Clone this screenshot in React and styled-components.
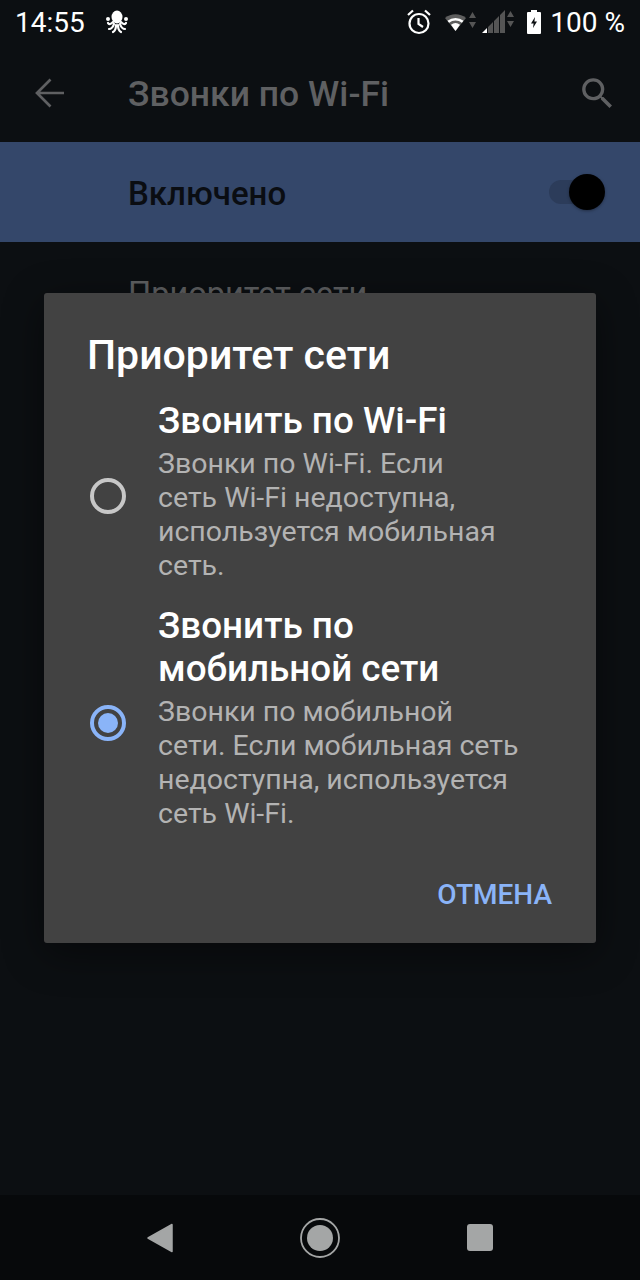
import React from "react";
import styled, { createGlobalStyle } from "styled-components";

const Global = createGlobalStyle`
  html, body { margin: 0; padding: 0; background: #0c0f12; }
  * { box-sizing: border-box; }
`;

const Screen = styled.div`
  position: relative;
  width: 640px;
  height: 1280px;
  display: flex;
  flex-direction: column;
  background: #0c0f12;
  font-family: Roboto, "Noto Sans", sans-serif;
  overflow: hidden;
`;

const StatusBar = styled.div`
  height: 44px;
  padding: 0 15px;
  display: flex;
  align-items: center;
  color: #fff;
  font-size: 28px;
  justify-content: space-between;
`;

const StatusGroup = styled.div`
  display: flex;
  align-items: center;
`;

const Clock = styled.span`
  margin-right: 21px;
`;

const StatusIcon = styled.svg`
  flex: none;
  margin-right: ${(p) => p.$gap}px;
`;

const Toolbar = styled.div`
  height: 98px;
  display: flex;
  align-items: center;
  padding: 0 22px 0 35px;
  color: #5f6062;
`;

const ToolbarTitle = styled.div`
  flex: 1;
  margin: 1px 0 0 63px;
  font-size: 35.5px;
  font-weight: 500;
  white-space: nowrap;
`;

const Banner = styled.div`
  height: 100px;
  background: #34476a;
  display: flex;
  align-items: center;
  justify-content: space-between;
  padding: 0 39px 0 128px;
  color: #0a0d12;
`;

const BannerLabel = styled.div`
  font-size: 33px;
  font-weight: 500;
  margin-top: 2px;
`;

const Track = styled.div`
  position: relative;
  width: 52px;
  height: 24px;
  border-radius: 12px;
  background: #2c3c5a;
`;

const Thumb = styled.div`
  position: absolute;
  right: -4px;
  top: -6px;
  width: 36px;
  height: 36px;
  border-radius: 50%;
  background: #000;
  box-shadow: 0 1px 3px rgba(0, 0, 0, 0.35);
`;

const Content = styled.div`
  flex: 1;
  padding: 32px 0 0 128px;
`;

const SettingLabel = styled.div`
  color: #5f6062;
  font-size: 32.5px;
  line-height: 40px;
`;

const NavBar = styled.div`
  height: 85px;
  background: #07090b;
  display: flex;
  align-items: center;
  justify-content: center;
  gap: 127px;
`;

const Dialog = styled.div`
  position: absolute;
  left: 44px;
  top: 293px;
  width: 552px;
  height: 650px;
  background: #424242;
  border-radius: 3px;
  box-shadow: 0 10px 40px rgba(0, 0, 0, 0.45);
  padding: 38px 44px 0 44px;
  display: flex;
  flex-direction: column;
`;

const DialogTitle = styled.div`
  color: #fff;
  font-size: 41px;
  font-weight: 500;
  line-height: 48px;
  margin-left: -1px;
`;

const Option = styled.div`
  display: flex;
  align-items: center;
  margin-top: ${(p) => p.$gap}px;
`;

const Radio = styled.div`
  flex: none;
  width: 36px;
  height: 36px;
  margin: 10px 32px 0 2px;
  border-radius: 50%;
  border: 4px solid ${(p) => (p.$on ? "#8ab4f8" : "#c7c7c7")};
  display: flex;
  align-items: center;
  justify-content: center;
`;

const RadioDot = styled.div`
  width: 20px;
  height: 20px;
  border-radius: 50%;
  background: #8ab4f8;
`;

const OptionText = styled.div`
  width: 365px;
`;

const OptionTitle = styled.div`
  color: #fff;
  font-size: 36.8px;
  font-weight: 500;
  line-height: 43px;
`;

const OptionDesc = styled.div`
  color: #b3b3b3;
  font-size: 28.5px;
  line-height: 34px;
  margin-top: 5px;
`;

const Actions = styled.div`
  display: flex;
  justify-content: flex-end;
  margin-top: 46px;
`;

const Cancel = styled.div`
  color: #8ab4f8;
  font-size: 28px;
  font-weight: 500;
  line-height: 36px;
`;

const OctopusIcon = () => (
  <svg width="22" height="24" viewBox="0 0 22 24" fill="#fff">
    <ellipse cx="11" cy="7" rx="5.500" ry="6.500" />
    <path d="M7 12c-2 2-4 3-5 1M15 12c2 2 4 3 5 1M8 14c-1 3-3 5-5 5M14 14c1 3 3 5 5 5M10 15c0 3-1 6-3 7M12 15c0 3 1 6 3 7" fill="none" stroke="#fff" strokeWidth="2.200" strokeLinecap="round" />
    <circle cx="2" cy="9" r="2" />
    <circle cx="20" cy="9" r="2" />
  </svg>
);

const StatusIcons = () => (
  <>
    <StatusIcon $gap={13} width="26" height="26" viewBox="0 0 26 26">
      <g fill="none" stroke="#fff" strokeWidth="2.200">
        <circle cx="13" cy="14.500" r="9.500" />
        <path d="M12.500 9v6l4.500 3" />
        <path d="M2 6l5-4.500M24 6l-5-4.500" />
      </g>
    </StatusIcon>
    <StatusIcon $gap={5} width="32" height="22" viewBox="0 0 32 22">
      <path d="M0 7a17 17 0 0 1 21 0L10.500 20z" fill="#5e5e5e" />
      <path d="M2.500 9.800a13 13 0 0 1 16 0l-1.600 1.900a10.500 10.500 0 0 0-12.800 0z" fill="#fff" />
      <path d="M6 13.800a7.500 7.500 0 0 1 9 0L10.500 20z" fill="#fff" />
      <path d="M24 7l3.500-6 3.500 6zM24 11l3.500 6 3.500-6z" fill="#555" />
    </StatusIcon>
    <StatusIcon $gap={13} width="32" height="24" viewBox="0 0 32 24">
      <path d="M0 23l5-5v5z" fill="#fff" />
      <path d="M6 23v-6l5-5v11zM12 23V11l5-5v17zM18 23V5l5-5v23z" fill="#555" />
      <path d="M25 7l3.500-6 3.500 6zM25 11l3.500 6 3.500-6z" fill="#555" />
    </StatusIcon>
    <StatusIcon $gap={9} width="14" height="24" viewBox="0 0 14 24">
      <path d="M4 0h6v2h3a1 1 0 0 1 1 1v20a1 1 0 0 1-1 1H1a1 1 0 0 1-1-1V3a1 1 0 0 1 1-1h3z" fill="#fff" />
      <path d="M8 7l-4 6.500h2.600L6 18l4-6.500H7.400z" fill="#0c0f12" />
    </StatusIcon>
  </>
);

export default function App() {
  return (
    <Screen>
      <Global />
      <StatusBar>
        <StatusGroup>
          <Clock>14:55</Clock>
          <OctopusIcon />
        </StatusGroup>
        <StatusGroup>
          <StatusIcons />
          <span>100 %</span>
        </StatusGroup>
      </StatusBar>
      <Toolbar>
        <svg width="30" height="30" viewBox="0 0 30 30" fill="none" stroke="currentColor" strokeWidth="2.700">
          <path d="M29 15H3M15.500 1.500L2 15l13.500 13.500" />
        </svg>
        <ToolbarTitle>Звонки по Wi-Fi</ToolbarTitle>
        <svg width="41" height="41" viewBox="0 0 24 24" fill="currentColor">
          <path d="M15.500 14h-.79l-.28-.27A6.471 6.471 0 0 0 16 9.500 6.500 6.500 0 1 0 9.500 16c1.610 0 3.090-.59 4.230-1.570l.27.28v.79l5 4.990L20.490 19l-4.990-5zm-6 0C7.010 14 5 11.990 5 9.500S7.010 5 9.500 5 14 7.010 14 9.500 11.990 14 9.500 14z" />
        </svg>
      </Toolbar>
      <Banner>
        <BannerLabel>Включено</BannerLabel>
        <Track>
          <Thumb />
        </Track>
      </Banner>
      <Content>
        <SettingLabel>Приоритет сети</SettingLabel>
      </Content>
      <NavBar>
        <svg width="26" height="30" viewBox="0 0 26 30">
          <path d="M25 1.500v27L1 15z" fill="#a4a6a6" stroke="#a4a6a6" strokeWidth="1.500" strokeLinejoin="round" />
        </svg>
        <svg width="40" height="40" viewBox="0 0 40 40">
          <circle cx="20" cy="20" r="19" fill="none" stroke="#a4a6a6" strokeWidth="1.800" />
          <circle cx="20" cy="20" r="13" fill="#a4a6a6" />
        </svg>
        <svg width="26" height="27" viewBox="0 0 26 27">
          <rect width="26" height="27" rx="3" fill="#a4a6a6" />
        </svg>
      </NavBar>
      <Dialog>
        <DialogTitle>Приоритет сети</DialogTitle>
        <Option $gap={20}>
          <Radio />
          <OptionText>
            <OptionTitle>Звонить по Wi-Fi</OptionTitle>
            <OptionDesc>{"Звонки по Wi-Fi. Если сеть\u00A0Wi-Fi недоступна, используется мобильная сеть."}</OptionDesc>
          </OptionText>
        </Option>
        <Option $gap={21}>
          <Radio $on>
            <RadioDot />
          </Radio>
          <OptionText>
            <OptionTitle>Звонить по мобильной сети</OptionTitle>
            <OptionDesc>Звонки по мобильной сети. Если мобильная сеть недоступна, используется сеть Wi-Fi.</OptionDesc>
          </OptionText>
        </Option>
        <Actions>
          <Cancel>ОТМЕНА</Cancel>
        </Actions>
      </Dialog>
    </Screen>
  );
}
